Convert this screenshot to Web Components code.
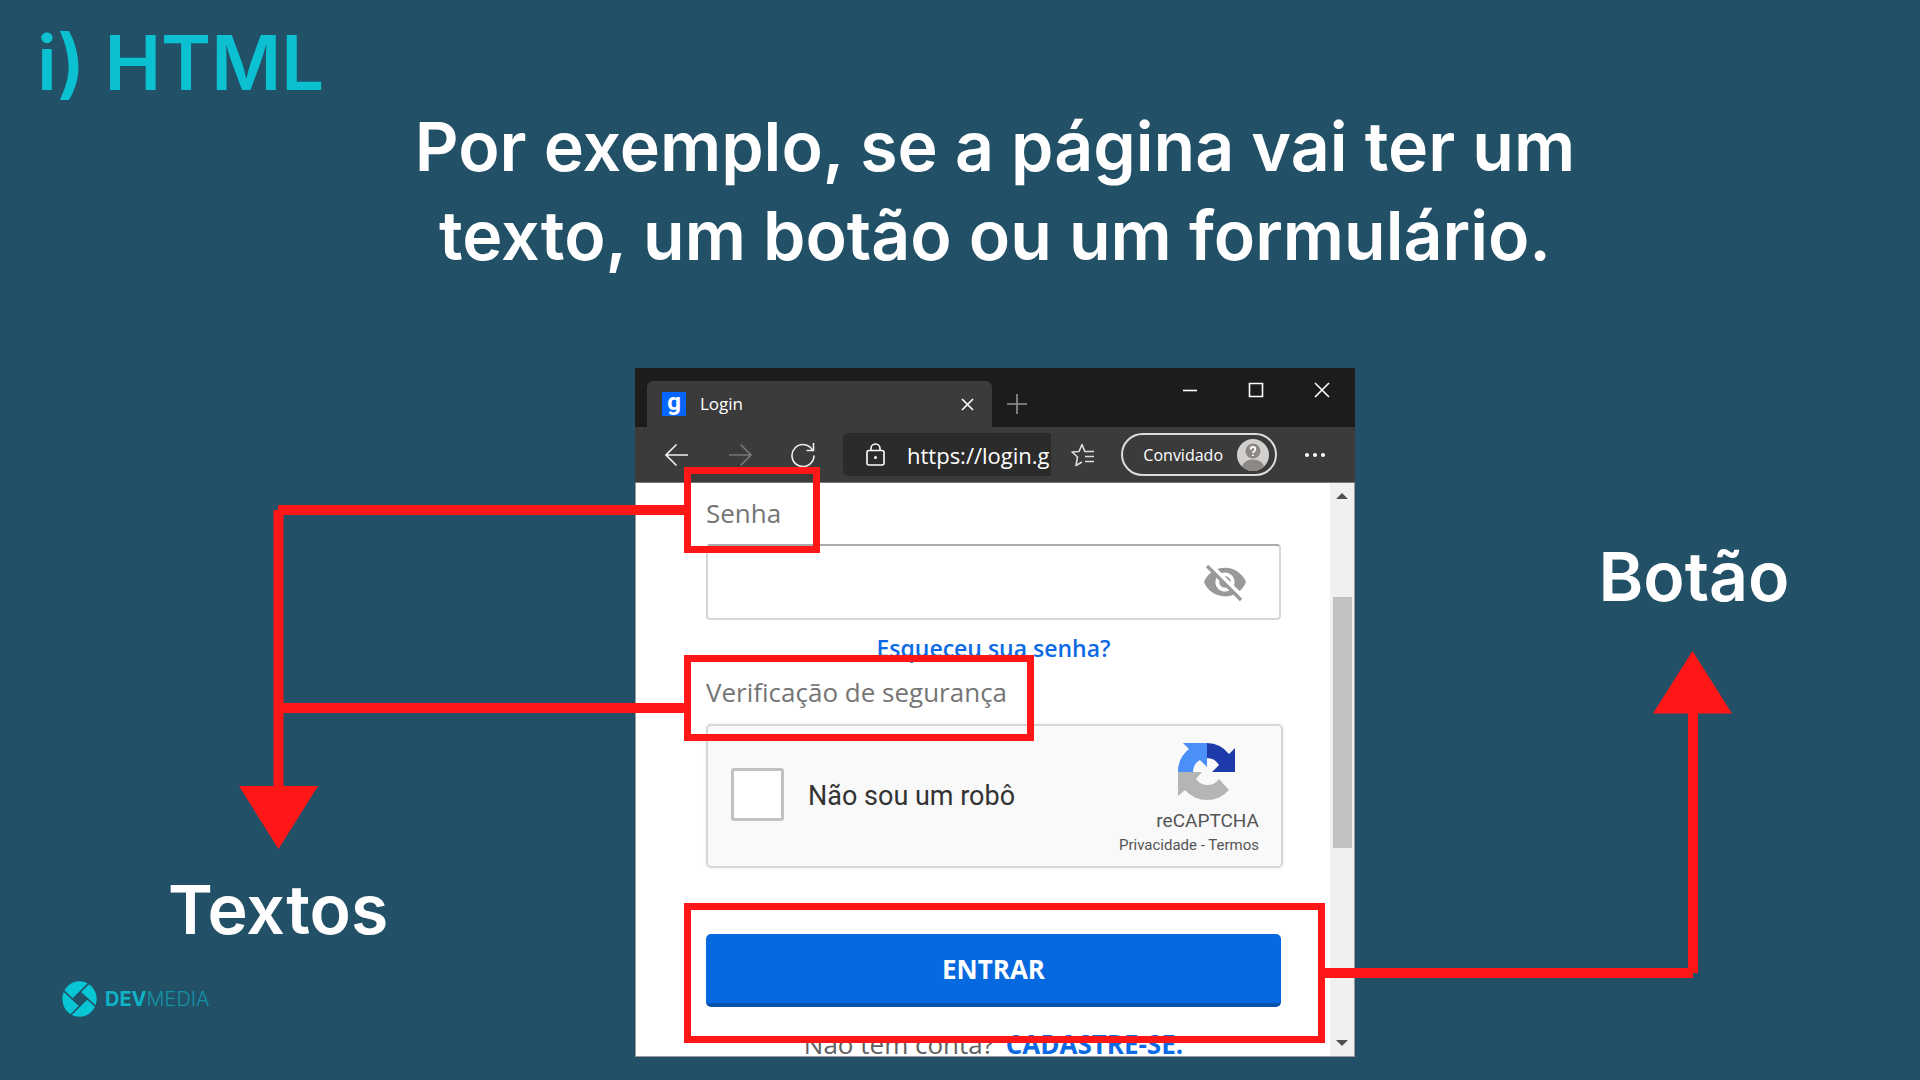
<!DOCTYPE html>
<html lang="pt-BR">
<head>
<meta charset="utf-8">
<title>HTML</title>
<style>
  body { margin: 0; background: #215067; font-family: Inter, "Liberation Sans", sans-serif; }
</style>
</head>
<body>
<lesson-slide>
  <span slot="title">i) HTML</span>
  <span slot="lead">Por exemplo, se a página vai ter um<br>texto, um botão ou um formulário.</span>
  <text-callout slot="left">Textos</text-callout>
  <dev-logo slot="left"></dev-logo>
  <browser-window slot="center">
    <login-form></login-form>
    <mark-box slot="marks" style="--x:49px;--y:99px;--w:136px;--h:86px"></mark-box>
    <mark-box slot="marks" style="--x:49px;--y:287px;--w:350px;--h:86px"></mark-box>
    <mark-box slot="marks" style="--x:49px;--y:535px;--w:641px;--h:140px"></mark-box>
  </browser-window>
  <button-callout slot="right">Botão</button-callout>
</lesson-slide>
<script>
const define = (name, html) => {
  const template = document.createElement('template');
  template.innerHTML = html;
  customElements.define(name, class extends HTMLElement {
    constructor() {
      super();
      this.attachShadow({ mode: 'open' }).append(template.content.cloneNode(true));
    }
  });
};

define('lesson-slide', `
<style>
  :host { display: block; min-height: 100vh; box-sizing: border-box; padding-top: 22px; overflow: hidden; }
  h1 { margin: 0; padding-left: 37px; font-size: 76px; line-height: 80px; font-weight: 600; color: #0ac0d1; }
  p { margin: 0; padding-left: 70px; text-align: center; font-size: 68px; line-height: 89px; font-weight: 600; color: #fff; }
  .stage { display: grid; grid-template-columns: minmax(0, 635fr) 720px minmax(0, 565fr); margin-top: 88px; }
  .side { display: flex; flex-direction: column; position: relative; z-index: 1; }
</style>
<header><h1><slot name="title"></slot></h1><p><slot name="lead"></slot></p></header>
<div class="stage">
  <div class="side"><slot name="left"></slot></div>
  <slot name="center"></slot>
  <div class="side"><slot name="right"></slot></div>
</div>`);

define('text-callout', `
<style>
  :host { display: flex; flex-direction: column; align-items: flex-end; padding-top: 137px; }
  svg { display: block; flex: none; margin-right: -49px; fill: #ff1717; }
  h2 { margin: 16px 247px 0 0; width: 220px; text-align: center; font-size: 68px; line-height: 88px; font-weight: 600; color: #fff; }
</style>
<svg width="445" height="344" viewBox="239 505 445 344" aria-hidden="true">
  <path d="M278 505H684V515H278ZM278 703H684V713H278ZM273.500 510H283.500V790H273.500ZM239 786H318L278.500 849Z"/>
</svg>
<h2><slot></slot></h2>`);

define('button-callout', `
<style>
  :host { display: flex; flex-direction: column; align-items: flex-start; padding-top: 164px; }
  svg { display: block; flex: none; margin: 31px 0 0 -31px; fill: #ff1717; }
  h2 { margin: 0 0 0 229px; width: 220px; text-align: center; font-size: 68px; line-height: 88px; font-weight: 600; color: #fff; }
</style>
<h2><slot></slot></h2>
<svg width="409" height="327" viewBox="1324 651 409 327" aria-hidden="true">
  <path d="M1324 968H1693V978H1324ZM1688 710H1698V973H1688ZM1653 713.500L1692.500 651L1732 713.500Z"/>
</svg>`);

define('dev-logo', `
<style>
  :host { display: flex; align-items: center; gap: 8px; margin-top: 28px; padding-left: 62px; height: 36px; font-size: 20px; line-height: 24px; font-weight: 300; color: #1593a6; }
  b { font-weight: 700; color: #0fb4c6; }
</style>
<svg width="35" height="36" viewBox="96 364 106 108" aria-hidden="true">
  <ellipse cx="149" cy="418" rx="52" ry="54" fill="#08c5d6"/>
  <path d="M150 397L171 418L150 439L129 418Z" fill="#215067"/>
  <path d="M178 370L128 419M102 394L151 440M121 468L172 417M198 440L149 396" stroke="#215067" stroke-width="5"/>
</svg>
<span><b>DEV</b>MEDIA</span>`);

define('mark-box', `
<style>
  :host { position: absolute; left: var(--x); top: var(--y); width: var(--w); height: var(--h); box-sizing: border-box; border: 7px solid #ff1717; pointer-events: none; }
</style>`);

define('browser-window', `
<style>
  :host { display: block; position: relative; align-self: start; font-family: "Open Sans", "Noto Sans", sans-serif; color: #fff; background: #1c1c1c; }
  button { display: flex; align-items: center; justify-content: center; padding: 0; border: 0; background: none; color: inherit; font: inherit; }
  svg { display: block; fill: none; stroke: currentColor; stroke-width: 1.600; }
  .tabs { display: flex; height: 59px; box-sizing: border-box; padding: 13px 0 0 12px; }
  .tab { display: flex; align-items: center; width: 345px; height: 46px; box-sizing: border-box; padding: 0 18px 0 15px; border-radius: 6px 6px 0 0; background: #3b3b3b; font-size: 17px; line-height: 24px; }
  .fav { width: 24px; height: 24px; margin-right: 14px; background: #0565ff; font: 700 24px/20px Roboto, sans-serif; text-align: center; }
  .tab button { margin-left: auto; }
  .plus { width: 50px; color: #949494; }
  .win { display: flex; margin-left: auto; height: 17px; }
  .win button { width: 66px; }
  .bar { display: flex; align-items: center; height: 56px; box-sizing: border-box; padding: 0 30px; background: #3b3b3b; border-bottom: 1px solid #777; }
  .nav { display: flex; gap: 39px; color: #eee; }
  .nav .off { color: #777; }
  .url { display: flex; align-items: center; gap: 22px; width: 208px; height: 43px; box-sizing: border-box; padding-left: 23px; margin-left: 28px; border-radius: 5px 0 0 5px; background: #2b2b2b; }
  .url input { flex: 1; min-width: 0; padding: 0; border: 0; outline: 0; color: #fff; font: 22px/32px "Open Sans", sans-serif; background: none; }
  .fave { margin-left: 19px; color: #ddd; }
  .who { justify-content: flex-end; gap: 14px; width: 157px; height: 43px; box-sizing: border-box; padding-right: 6px; margin: 0 28px 0 25px; border: 2px solid #ddd; border-radius: 22px; font-size: 16px; }
  .body { display: flex; height: 573px; overflow: hidden; background: #fff; border: solid #999; border-width: 0 1px 1px; }
  ::slotted(login-form) { flex: 1; }
  .scroll { display: flex; flex-direction: column; align-items: center; width: 24px; background: #f0f0f0; box-sizing: border-box; padding: 10px 0; }
  .scroll svg { fill: #505050; stroke: none; }
  .thumb { width: 19px; height: 251px; margin: 98px 0 auto; background: #c1c1c1; }
</style>
<div class="tabs">
  <div class="tab"><span class="fav">g</span><span>Login</span>
    <button aria-label="Fechar aba"><svg width="13" height="13"><path d="M1 1L12 12M12 1L1 12"/></svg></button></div>
  <button class="plus" aria-label="Nova aba"><svg width="20" height="20"><path d="M10 0V20M0 10H20"/></svg></button>
  <div class="win">
    <button aria-label="Minimizar"><svg width="16" height="16"><path d="M1 8.500H15"/></svg></button>
    <button aria-label="Maximizar"><svg width="16" height="16"><path d="M1.500 1.500H14.500V14.500H1.500Z"/></svg></button>
    <button aria-label="Fechar"><svg width="16" height="16"><path d="M1 1L15 15M15 1L1 15"/></svg></button>
  </div>
</div>
<div class="bar">
  <div class="nav">
    <button aria-label="Voltar"><svg width="24" height="24"><path d="M23 12H1M11.500 1.500L1 12L11.500 22.500"/></svg></button>
    <button class="off" aria-label="Avançar"><svg width="24" height="24"><path d="M1 12H23M12.500 1.500L23 12L12.500 22.500"/></svg></button>
    <button aria-label="Atualizar"><svg width="24" height="24"><path d="M22 8A11 11 0 1 0 23 12.500M22.500 0V7.500H15.500"/></svg></button>
  </div>
  <div class="url">
    <svg width="19" height="24"><rect x="1" y="7.500" width="17" height="14.500" rx="2"/><path d="M5 7.500V5.500A4.500 4.500 0 0 1 14 5.500V7.500"/><circle cx="9.500" cy="14.500" r="1.500" fill="currentColor" stroke="none"/></svg>
    <input aria-label="Endereço" value="https://login.g">
  </div>
  <button class="fave" aria-label="Favoritos"><svg width="26" height="26"><path d="M20 9.500H14.800L12 2.500L9 9.500L2 10L7.500 15L6 23.500L12 20M15 9.500H24M15 14.500H24M15 19.500H24" stroke-linejoin="round"/></svg></button>
  <button class="who">Convidado
    <svg width="32" height="32" style="stroke:none"><defs><clipPath id="c"><circle cx="16" cy="16" r="16"/></clipPath></defs><circle cx="16" cy="16" r="16" fill="#d2d0ce"/><g clip-path="url(#c)" fill="#8c8885"><circle cx="16" cy="12" r="7.500"/><ellipse cx="16" cy="28" rx="11" ry="7.500"/></g><path d="M13.700 10.500Q13.700 8 16 8T18.300 10.300Q18.300 12 16 13.500V14M16 15.500V17" fill="none" stroke="#fff" stroke-width="1.800"/></svg>
  </button>
  <button aria-label="Mais"><svg width="20" height="6" style="stroke:none;fill:currentColor"><circle cx="2" cy="3" r="2"/><circle cx="10" cy="3" r="2"/><circle cx="18" cy="3" r="2"/></svg></button>
</div>
<div class="body">
  <slot></slot>
  <div class="scroll">
    <svg width="12" height="6"><path d="M6 0L12 6H0Z"/></svg>
    <div class="thumb"></div>
    <svg width="12" height="6"><path d="M0 0H12L6 6Z"/></svg>
  </div>
</div>
<slot name="marks"></slot>`);

define('login-form', `
<style>
  :host { display: block; padding: 12px 49px 0 70px; font: 26px/36px "Open Sans", "Noto Sans", sans-serif; color: #757575; }
  form { display: flex; flex-direction: column; }
  a { color: #0b6ae4; text-decoration: none; }
  .field { display: flex; align-items: center; height: 76px; box-sizing: border-box; margin: 13px 0 12px; padding-right: 31px; border: 2px solid #d6d6d6; border-top-color: #aaa; border-radius: 4px; }
  .field input { flex: 1; min-width: 0; border: 0; outline: 0; background: none; font: inherit; padding: 0 16px; }
  .field button { padding: 0; border: 0; background: none; }
  svg { display: block; }
  .forgot { align-self: center; font-size: 23px; line-height: 32px; font-weight: 600; margin-bottom: 10px; }
  .captcha { display: flex; align-items: center; height: 144px; box-sizing: border-box; margin: 14px -2px 66px 0; padding: 0 22px 0 23px; border: 2px solid #d6d6d6; border-radius: 5px; background: #f9f9f9; box-shadow: 0 0 5px #0001; font-family: Roboto, sans-serif; color: #333; }
  .captcha input { appearance: none; width: 53px; height: 53px; margin: 0 24px 4px 0; border: 3px solid #c1c1c1; border-radius: 3px; background: #fff; }
  .captcha label { font-size: 27px; }
  .brand { display: flex; flex-direction: column; align-items: flex-end; margin-left: auto; padding-top: 8px; font-size: 19px; line-height: 24px; color: #555; }
  .brand svg { margin: 0 23px 8px 0; }
  .brand small { font-size: 15px; line-height: 24px; }
  .brand a { color: inherit; }
  .enter { height: 73px; padding: 0; border: 0; border-bottom: 4px solid #0551ab; border-radius: 5px; background: #0769df; color: #fff; font: 700 26px/36px "Open Sans", sans-serif; }
  p { margin: 19px 0 0; text-align: center; white-space: nowrap; color: #606060; }
  p a { font-weight: 700; margin-left: 5px; }
</style>
<form>
  <label for="pw">Senha</label>
  <div class="field"><input id="pw" type="password">
    <button type="button" aria-label="Mostrar senha"><svg width="46" height="46" viewBox="0 0 24 24" fill="#999"><path d="M12 7c2.760 0 5 2.240 5 5 0 .650-.130 1.260-.360 1.830l2.920 2.920c1.510-1.260 2.700-2.890 3.430-4.750-1.730-4.390-6-7.500-11-7.500-1.400 0-2.740.250-3.980.700l2.160 2.160C10.740 7.130 11.350 7 12 7zM2 4.270l2.280 2.280.460.460C3.080 8.300 1.780 10.020 1 12c1.730 4.390 6 7.500 11 7.500 1.550 0 3.030-.300 4.380-.840l.420.420L19.730 22 21 20.730 3.270 3 2 4.270zM7.530 9.800l1.550 1.550c-.050.210-.080.430-.080.650 0 1.660 1.340 3 3 3 .220 0 .440-.030.650-.080l1.550 1.550c-.670.330-1.410.530-2.200.530-2.760 0-5-2.240-5-5 0-.790.200-1.530.530-2.200zm4.310-.780l3.150 3.150.020-.160c0-1.660-1.340-3-3-3l-.170.010z"/></svg></button>
  </div>
  <a class="forgot" href="#">Esqueceu sua senha?</a>
  <label for="robot">Verificação de segurança</label>
  <div class="captcha">
    <input id="robot" type="checkbox"><label for="robot">Não sou um robô</label>
    <div class="brand">
      <svg width="58" height="58" viewBox="0 0 58 58">
        <path d="M29 0A29 29 0 0 1 51 11L57 5V29H34L41 22A14 14 0 0 0 29 15Z" fill="#1c3aa9"/>
        <path d="M0 29A29 29 0 0 1 11 6L5 0H29V24L22 17A14 14 0 0 0 15 29Z" fill="#4a90f8"/>
        <path d="M0 29H24L18 36A14 14 0 0 0 41 36L51 47A29 29 0 0 1 7 47L0 53Z" fill="#b5b5b5"/>
      </svg>
      <span>reCAPTCHA</span>
      <small><a href="#">Privacidade</a> - <a href="#">Termos</a></small>
    </div>
  </div>
  <button class="enter" type="button">ENTRAR</button>
  <p>Não tem conta? <a href="#">CADASTRE-SE.</a></p>
</form>`);
</script>
</body>
</html>
